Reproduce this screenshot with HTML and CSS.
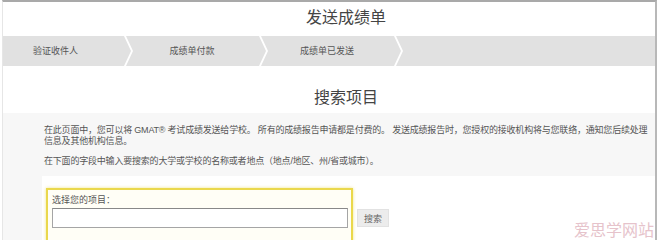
FILE: index.html
```html
<!DOCTYPE html>
<html lang="zh-CN">
<head>
    <meta charset="UTF-8">
    <meta name="viewport" content="width=device-width, initial-scale=1.0">
    <title>发送成绩单</title>
    <link rel="stylesheet" href="styles.css">
</head>
<body>
    <div class="page">
        <div class="header">
            <h1>发送成绩单</h1>
        </div>

        <div class="steps">
            <div class="step first">验证收件人</div>
            <div class="step">成绩单付款</div>
            <div class="step">成绩单已发送</div>
            <div class="step last"></div>
        </div>

        <div class="search-title">
            <h2>搜索项目</h2>
        </div>

        <div class="content">
            <p>在此页面中，您可以将 GMAT® 考试成绩发送给学校。 所有的成绩报告申请都是付费的。 发送成绩报告时，您授权的接收机构将与您联络，通知您后续处理信息及其他机构信息。</p>
            <p>在下面的字段中输入要搜索的大学或学校的名称或者地点（地点/地区、州/省或城市）。</p>

            <div class="panel">
                <div class="form-row">
                    <div class="field-box">
                        <label for="program">选择您的项目：</label>
                        <input id="program" type="text">
                    </div>
                    <button class="search-btn">搜索</button>
                </div>
            </div>
        </div>

        <div class="watermark">爱思学网站</div>
    </div>
</body>
</html>
```

FILE: styles.css
```css
body {
    margin: 0;
    background: #fff;
    font-family: "Liberation Sans", "Noto Sans CJK SC", sans-serif;
    color: #555;
}
.page {
    position: relative;
    margin-left: 2px;
    width: 652px;
    height: 238px;
    border-top: 2px solid #a9a9a9;
    border-left: 1px solid #e6e6e6;
    border-right: 2px solid #b8b8b8;
    overflow: hidden;
}
.header {
    height: 34px;
    padding-left: 34px;
    text-align: center;
}
.header h1 {
    margin: 0;
    font-size: 16px;
    font-weight: normal;
    line-height: 31px;
    color: #444;
}
.steps {
    display: flex;
    height: 30px;
    margin-left: -3px;
    background: #fff;
}
.step {
    box-sizing: border-box;
    width: 140px;
    margin-right: -5px;
    padding-right: 8px;
    background: #e1e1e1;
    font-size: 9px;
    line-height: 30px;
    text-align: center;
    color: #555;
    clip-path: polygon(0 0, calc(100% - 7px) 0, 100% 50%, calc(100% - 7px) 100%, 0 100%, 7px 50%);
}
.step.first {
    width: 131px;
    padding-right: 20px;
    clip-path: polygon(0 0, calc(100% - 7px) 0, 100% 50%, calc(100% - 7px) 100%, 0 100%);
}
.step.last {
    flex: 1;
    margin-right: 0;
    clip-path: polygon(0 0, 100% 0, 100% 100%, 0 100%, 7px 50%);
}
.search-title {
    height: 47px;
    padding-left: 34px;
    text-align: center;
}
.search-title h2 {
    margin: 0;
    padding-top: 23px;
    font-size: 16px;
    font-weight: normal;
    line-height: 17px;
    color: #444;
}
.content {
    background: #f7f7f7;
    padding-top: 12px;
    padding-left: 41px;
    height: 200px;
}
.content p {
    margin: 0 0 9px 0;
    font-size: 9px;
    line-height: 11px;
    letter-spacing: -0.2px;
    color: #555;
}
.panel {
    background: #fff;
    margin: 7px 0 0 -2px;
    padding: 12px 0 0 4px;
    height: 100px;
}
.form-row {
    display: flex;
    align-items: flex-start;
}
.field-box {
    width: 296px;
    padding: 5px 3px 12px 4px;
    border: 2px solid #ead84c;
    box-shadow: 0 0 3px rgba(230, 210, 60, 0.6);
    background: #fffef6;
}
.field-box label {
    display: block;
    font-size: 9px;
    line-height: 10px;
    color: #555;
    margin-bottom: 3px;
}
.field-box input {
    display: block;
    box-sizing: border-box;
    width: 296px;
    height: 20px;
    margin: 0;
    border: 1px solid #a5a5a5;
    border-top-color: #888;
    background: #fff;
}
.search-btn {
    margin: 21px 0 0 4px;
    width: 32px;
    height: 18px;
    padding: 0;
    border: 1px solid #e2e2e2;
    background: #ececec;
    font-family: "Liberation Sans", "Noto Sans CJK SC", sans-serif;
    font-size: 9px;
    color: #666;
}
.watermark {
    position: absolute;
    right: 0;
    bottom: 0;
    padding: 0 1px 0 4px;
    background: rgba(255, 255, 255, 0.7);
    font-family: "Noto Sans CJK SC", sans-serif;
    font-size: 16px;
    line-height: 21px;
    color: #e6c3cb;
}
```
